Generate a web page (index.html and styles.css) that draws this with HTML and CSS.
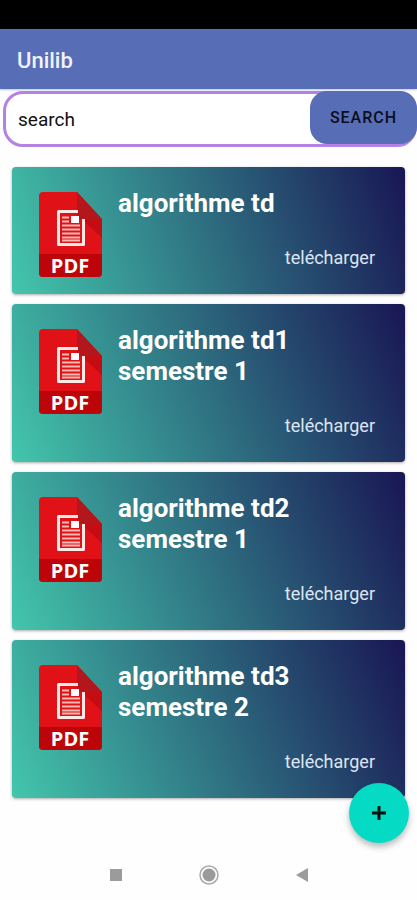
FILE: index.html
```html
<!DOCTYPE html>
<html lang="fr">
<head>
<meta charset="utf-8">
<meta name="viewport" content="width=device-width, initial-scale=1">
<title>Unilib</title>
<link rel="stylesheet" href="styles.css">
</head>
<body>
<svg class="sprite" aria-hidden="true">
  <symbol id="pdf" viewBox="0 0 63 85">
    <path d="M4 0H38L63 27V81a4 4 0 0 1-4 4H4a4 4 0 0 1-4-4V4a4 4 0 0 1 4-4Z" fill="#e01218"/>
    <path d="M42 27 63 46V27Z" fill="#c50c12"/>
    <path d="M38 0 63 27H42a4 4 0 0 1-4-4Z" fill="#b3161b"/>
    <path d="M0 62H63V81a4 4 0 0 1-4 4H4a4 4 0 0 1-4-4Z" fill="#bd0509"/>
    <path d="M39 19.500H19.500V52.500H44.500V27" fill="none" stroke="#fbe9e6" stroke-width="3" stroke-linejoin="round"/>
    <path d="M23 25.500H30M23 29.500H30M23 33.500H41M23 37.500H41M23 41.500H41M23 45.500H41M23 48.500H41" stroke="#f3b9b3" stroke-width="2"/>
    <path d="M32 24H40V31H32Z" fill="#fff"/>
  </symbol>
</svg>
<div class="status"></div>
<header class="appbar"><h1>Unilib</h1></header>
<main>
  <form class="search">
    <input class="search-field" type="text" value="search" aria-label="search">
    <button class="search-button" type="button">SEARCH</button>
  </form>
  <ul class="list">
    <li class="card card-short">
      <svg class="icon" viewBox="0 0 63 85"><use href="#pdf"/><text class="pdf-label" x="31" y="81">PDF</text></svg>
      <div class="info"><h2>algorithme td</h2><a href="#">telécharger</a></div>
    </li>
    <li class="card">
      <svg class="icon" viewBox="0 0 63 85"><use href="#pdf"/><text class="pdf-label" x="31" y="81">PDF</text></svg>
      <div class="info"><h2>algorithme td1<br>semestre 1</h2><a href="#">telécharger</a></div>
    </li>
    <li class="card">
      <svg class="icon" viewBox="0 0 63 85"><use href="#pdf"/><text class="pdf-label" x="31" y="81">PDF</text></svg>
      <div class="info"><h2>algorithme td2<br>semestre 1</h2><a href="#">telécharger</a></div>
    </li>
    <li class="card">
      <svg class="icon" viewBox="0 0 63 85"><use href="#pdf"/><text class="pdf-label" x="31" y="81">PDF</text></svg>
      <div class="info"><h2>algorithme td3<br>semestre 2</h2><a href="#">telécharger</a></div>
    </li>
  </ul>
</main>
<button class="fab" type="button" aria-label="Ajouter">
  <svg width="14" height="14" viewBox="0 0 14 14" aria-hidden="true"><path d="M7 0V14M0 7H14" stroke="#05130f" stroke-width="3"/></svg>
</button>
<nav class="navbar" aria-label="Navigation">
  <button type="button" aria-label="Applications"><svg viewBox="0 0 20 20"><path d="M4 4H16V16H4Z" fill="#9b9b9b"/></svg></button>
  <button type="button" aria-label="Accueil"><svg viewBox="0 0 20 20"><circle cx="10" cy="10" r="9" fill="none" stroke="#aaa" stroke-width="1.500"/><circle cx="10" cy="10" r="6.500" fill="#9b9b9b"/></svg></button>
  <button type="button" aria-label="Retour"><svg viewBox="0 0 20 20"><path d="M16 3V17L4 10Z" fill="#9b9b9b"/></svg></button>
</nav>
</body>
</html>
```
FILE: styles.css
```css
* {
  box-sizing: border-box;
}

body {
  margin: 0;
  min-height: 100vh;
  display: flex;
  flex-direction: column;
  background: #fefefe;
  font-family: Roboto, "Liberation Sans", sans-serif;
}

button {
  border: 0;
  padding: 0;
  font-family: inherit;
}

.sprite {
  position: absolute;
  width: 0;
  height: 0;
}

.status {
  height: 29px;
  background: #000;
}

.appbar {
  height: 60px;
  padding: 0 17px;
  display: flex;
  align-items: center;
  background: #576db6;
  box-shadow: 0 1px 2px #576db666;
}

.appbar h1 {
  margin: 0;
  padding-top: 4px;
  color: #f0f3ff;
  font-size: 22px;
  font-weight: 500;
  line-height: 24px;
}

main {
  flex: 1;
}

.search {
  display: grid;
  grid-template-columns: 1fr 107px;
  margin: 2px 0 0 3px;
}

.search-field {
  grid-area: 1 / 1 / 2 / 3;
  min-width: 0;
  height: 56px;
  padding: 0 120px 0 12px;
  border: 3px solid #b283e2;
  border-radius: 20px;
  background: #fff;
  color: #111;
  font-family: inherit;
  font-size: 19px;
}

.search-button {
  grid-area: 1 / 2;
  height: 53px;
  border-radius: 17px;
  background: #576db6;
  color: #0b0e1c;
  font-size: 16px;
  font-weight: 500;
  letter-spacing: 1px;
}

.list {
  margin: 0;
  padding: 20px 12px 22px;
  display: flex;
  flex-direction: column;
  gap: 10px;
  list-style: none;
}

.card {
  display: flex;
  gap: 16px;
  padding: 21px 30px 16px 27px;
  border-radius: 4px;
  background: linear-gradient(68deg, #43c6ac, #191654);
  box-shadow: 0 1px 3px #0005;
}

.card-short {
  background: linear-gradient(72deg, #43c6ac, #191654);
}

.icon {
  flex: none;
  width: 63px;
  height: 85px;
  margin-top: 4px;
}

.pdf-label {
  fill: #fff;
  font-family: "Open Sans", sans-serif;
  font-size: 20px;
  font-weight: 700;
  text-anchor: middle;
}

.info {
  flex: 1;
  display: flex;
  flex-direction: column;
  gap: 27px;
  padding-bottom: 8px;
}

.info h2 {
  margin: 0;
  color: #fff;
  font-size: 26px;
  font-weight: 700;
  line-height: 31px;
}

.info a {
  align-self: flex-end;
  color: #dde6f4;
  font-size: 18px;
  line-height: 24px;
  text-decoration: none;
}

.fab {
  position: fixed;
  right: 8px;
  bottom: 57px;
  width: 60px;
  height: 60px;
  display: grid;
  place-items: center;
  border-radius: 50%;
  background: #05dbc4;
  box-shadow: 0 4px 6px #0004;
}

.navbar {
  height: 50px;
  display: flex;
  justify-content: center;
  gap: 73px;
}

.navbar button {
  width: 20px;
  background: none;
}

.navbar svg {
  display: block;
  width: 20px;
  height: 20px;
}
```
